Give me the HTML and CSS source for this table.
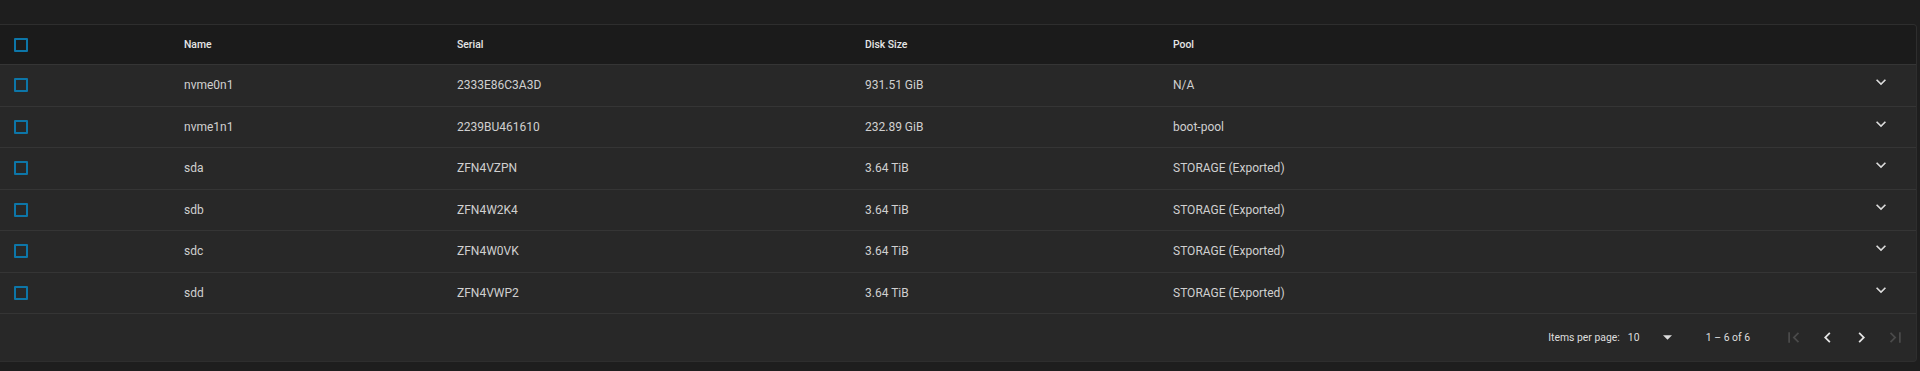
FILE: index.html
```html
<!DOCTYPE html>
<html lang="en">
<head>
<meta charset="utf-8">
<title>Disks</title>
<link rel="stylesheet" href="styles.css">
</head>
<body>
<div class="page">
  <div class="card">
    <div class="row head">
      <div class="cell cb-cell"><span class="cb"></span></div>
      <div class="cell">Name</div>
      <div class="cell">Serial</div>
      <div class="cell">Disk Size</div>
      <div class="cell">Pool</div>
      <div class="cell"></div>
    </div>
    <div class="row">
      <div class="cell cb-cell"><span class="cb"></span></div>
      <div class="cell">nvme0n1</div>
      <div class="cell">2333E86C3A3D</div>
      <div class="cell">931.51 GiB</div>
      <div class="cell">N/A</div>
      <div class="cell exp"><svg viewBox="0 0 24 24" width="20" height="20"><path d="M16.59 8.59L12 13.17 7.41 8.59 6 10l6 6 6-6z"/></svg></div>
    </div>
    <div class="row">
      <div class="cell cb-cell"><span class="cb"></span></div>
      <div class="cell">nvme1n1</div>
      <div class="cell">2239BU461610</div>
      <div class="cell">232.89 GiB</div>
      <div class="cell">boot-pool</div>
      <div class="cell exp"><svg viewBox="0 0 24 24" width="20" height="20"><path d="M16.59 8.59L12 13.17 7.41 8.59 6 10l6 6 6-6z"/></svg></div>
    </div>
    <div class="row">
      <div class="cell cb-cell"><span class="cb"></span></div>
      <div class="cell">sda</div>
      <div class="cell">ZFN4VZPN</div>
      <div class="cell">3.64 TiB</div>
      <div class="cell">STORAGE (Exported)</div>
      <div class="cell exp"><svg viewBox="0 0 24 24" width="20" height="20"><path d="M16.59 8.59L12 13.17 7.41 8.59 6 10l6 6 6-6z"/></svg></div>
    </div>
    <div class="row">
      <div class="cell cb-cell"><span class="cb"></span></div>
      <div class="cell">sdb</div>
      <div class="cell">ZFN4W2K4</div>
      <div class="cell">3.64 TiB</div>
      <div class="cell">STORAGE (Exported)</div>
      <div class="cell exp"><svg viewBox="0 0 24 24" width="20" height="20"><path d="M16.59 8.59L12 13.17 7.41 8.59 6 10l6 6 6-6z"/></svg></div>
    </div>
    <div class="row">
      <div class="cell cb-cell"><span class="cb"></span></div>
      <div class="cell">sdc</div>
      <div class="cell">ZFN4W0VK</div>
      <div class="cell">3.64 TiB</div>
      <div class="cell">STORAGE (Exported)</div>
      <div class="cell exp"><svg viewBox="0 0 24 24" width="20" height="20"><path d="M16.59 8.59L12 13.17 7.41 8.59 6 10l6 6 6-6z"/></svg></div>
    </div>
    <div class="row">
      <div class="cell cb-cell"><span class="cb"></span></div>
      <div class="cell">sdd</div>
      <div class="cell">ZFN4VWP2</div>
      <div class="cell">3.64 TiB</div>
      <div class="cell">STORAGE (Exported)</div>
      <div class="cell exp"><svg viewBox="0 0 24 24" width="20" height="20"><path d="M16.59 8.59L12 13.17 7.41 8.59 6 10l6 6 6-6z"/></svg></div>
    </div>
    <div class="paginator">
      <span class="ipp">Items per page:</span>
      <span class="select"><span class="val">10</span><svg class="tri" viewBox="0 0 10 5" width="9" height="5"><path d="M0 0h10L5 5z"/></svg></span>
      <span class="range">1 – 6 of 6</span>
      <span class="btn dim"><svg viewBox="0 0 24 24" width="21" height="21"><path d="M18.41 16.59L13.82 12l4.59-4.59L17 6l-6 6 6 6zM6 6h2v12H6z"/></svg></span>
      <span class="btn"><svg viewBox="0 0 24 24" width="21" height="21"><path d="M15.41 7.41L14 6l-6 6 6 6 1.41-1.41L10.83 12z"/></svg></span>
      <span class="btn"><svg viewBox="0 0 24 24" width="21" height="21"><path d="M10 6L8.59 7.41 13.17 12l-4.58 4.59L10 18l6-6z"/></svg></span>
      <span class="btn dim"><svg viewBox="0 0 24 24" width="21" height="21"><path d="M5.59 7.41L10.18 12l-4.59 4.59L7 18l6-6-6-6zM16 6h2v12h-2z"/></svg></span>
    </div>
  </div>
</div>
</body>
</html>
```

FILE: styles.css
```css
html, body {
  margin: 0;
  padding: 0;
  background: #1e1e1e;
  font-family: Roboto, "Liberation Sans", sans-serif;
  color: #d2d2d2;
}

.page {
  padding-top: 24px;
  width: 1920px;
  height: 371px;
  box-sizing: border-box;
}

.card {
  width: 1917px;
  box-sizing: border-box;
  background: #282828;
  border-top: 1px solid #2e2e2e;
  border-right: 1px solid #2e2e2e;
  border-bottom: 1px solid #2e2e2e;
  border-radius: 0 4px 4px 0;
  overflow: hidden;
}

.row {
  display: grid;
  grid-template-columns: 184px 273px 408px 308px 1fr 70px;
  align-items: center;
  height: 41.5px;
  box-sizing: border-box;
  border-top: 1px solid #353535;
  font-size: 12px;
  color: #d0d0d0;
}

.row.head {
  height: 39px;
  border-top: none;
  background: #1b1b1b;
  font-size: 10.4px;
  font-weight: 500;
  color: #e6e6e6;
}

.cell {
  white-space: nowrap;
}

.cb-cell {
  padding-left: 14px;
  display: flex;
  align-items: center;
}

.cb {
  display: block;
  width: 14px;
  height: 14px;
  box-sizing: border-box;
  border: 2px solid #0d76a8;
  border-radius: 1px;
}

.exp {
  display: flex;
  justify-content: center;
  align-items: center;
  padding-bottom: 6px;
}

.exp svg {
  fill: #dcdcdc;
  display: block;
}

.paginator {
  height: 48px;
  box-sizing: border-box;
  border-top: 1px solid #353535;
  display: flex;
  justify-content: flex-end;
  align-items: center;
  padding-right: 4px;
  font-size: 10.4px;
  color: #dedede;
}

.ipp {
  margin-right: 8px;
}

.select {
  display: flex;
  align-items: center;
  width: 48px;
  margin-right: 30px;
}

.select .val {
  flex: 1;
}

.tri {
  fill: #dcdcdc;
  display: block;
  margin-right: 4px;
}

.range {
  margin-right: 26px;
}

.btn {
  width: 34px;
  height: 34px;
  display: flex;
  align-items: center;
  justify-content: center;
}

.btn svg {
  fill: #e6e6e6;
  display: block;
}

.btn.dim svg {
  fill: #4a4a4a;
}
```
